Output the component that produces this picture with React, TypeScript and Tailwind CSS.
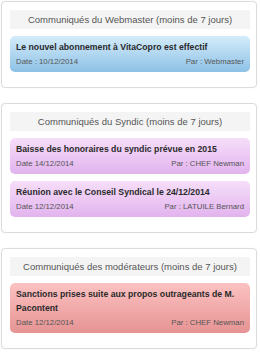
import React from "react";

type Msg = { title: string; date: string; by: string };
type Section = { title: string; tone: "blue" | "purple" | "red"; items: Msg[] };

const sections: Section[] = [
  {
    title: "Communiqués du Webmaster (moins de 7 jours)",
    tone: "blue",
    items: [{ title: "Le nouvel abonnement à VitaCopro est effectif", date: "Date : 10/12/2014", by: "Par : Webmaster" }],
  },
  {
    title: "Communiqués du Syndic (moins de 7 jours)",
    tone: "purple",
    items: [
      { title: "Baisse des honoraires du syndic prévue en 2015", date: "Date 14/12/2014", by: "Par : CHEF Newman" },
      { title: "Réunion avec le Conseil Syndical le 24/12/2014", date: "Date 12/12/2014", by: "Par : LATUILE Bernard" },
    ],
  },
  {
    title: "Communiqués des modérateurs (moins de 7 jours)",
    tone: "red",
    items: [
      { title: "Sanctions prises suite aux propos outrageants de M. Pacontent", date: "Date 12/12/2014", by: "Par : CHEF Newman" },
    ],
  },
];

const toneClass: Record<Section["tone"], string> = {
  blue: "bg-gradient-to-b from-[#d4ecfa] to-[#8dc1e6] border-[#a9d2ee]",
  purple: "bg-gradient-to-b from-[#f6def9] to-[#e2b3ee] border-[#ebc8f3]",
  red: "bg-gradient-to-b from-[#fcc2c2] to-[#e69393] border-[#f0abab]",
};

export default function App() {
  return (
    <div
      className="w-[260px] h-[353px] bg-white pt-[1px] pl-[1px]"
      style={{ fontFamily: '"Liberation Sans", Arial, sans-serif' }}
    >
      <div className="flex flex-col gap-[15px]">
        {sections.map((s) => (
          <div
            key={s.title}
            className="w-[256px] bg-white border border-[#dcdcdc] rounded-[4px] pt-2 pb-2 pl-2 pr-[6px] shadow-[0_0_2px_rgba(0,0,0,0.06)]"
          >
            <div className="h-[19px] bg-[#f4f4f4] text-[#555] text-[9.5px] leading-[19px] text-center mb-[7px]">
              {s.title}
            </div>
            <div className="flex flex-col gap-[7px] mb-[7px]">
              {s.items.map((m) => (
                <div
                  key={m.title}
                  className={`rounded-[5px] border-0 px-[6px] pt-[4px] pb-[4px] ${toneClass[s.tone]}`}
                >
                  <div className="text-[#2a2a2a] font-bold text-[8.7px] leading-[14px]">{m.title}</div>
                  <div className="flex justify-between text-[#555] text-[7.8px] leading-[12px] mt-[2px]">
                    <span>{m.date}</span>
                    <span>{m.by}</span>
                  </div>
                </div>
              ))}
            </div>
          </div>
        ))}
      </div>
    </div>
  );
}
